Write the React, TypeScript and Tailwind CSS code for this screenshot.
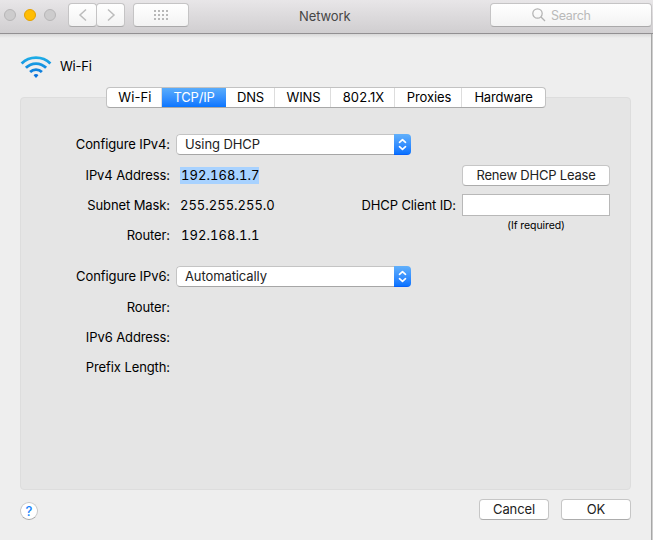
import type { ReactNode } from "react";

const tabs = [
  { name: "Wi-Fi", style: "w-[55px] pl-[2px] tracking-[0.1px]" },
  { name: "TCP/IP", style: "w-[64px] tracking-[-0.2px]" },
  { name: "DNS", style: "w-[49px] pl-px" },
  { name: "WINS", style: "w-[56px] pl-[2px]" },
  { name: "802.1X", style: "w-[64px] pl-[2px] tracking-[0.1px]" },
  { name: "Proxies", style: "w-[67px] pl-[2px]" },
  { name: "Hardware", style: "w-[83px] tracking-[-0.2px]" },
];

function PushButton({ children, className }: { children: ReactNode; className: string }) {
  return (
    <button className={`h-[21px] rounded-[4px] border border-[#c6c6c6] border-b-[#acacac] bg-white text-center leading-[19px] text-[#222] ${className}`}>
      {children}
    </button>
  );
}

function Popup({ value }: { value: string }) {
  return (
    <div className="ml-[6px] flex h-[21px] w-[235px] overflow-hidden rounded-[4px]">
      <div className="flex-1 rounded-l-[4px] border border-r-0 border-[#c4c4c4] border-b-[#a6a6a6] bg-white pl-2 leading-[19px] text-[#222]">{value}</div>
      <div className="w-[17px] border-b border-[#0860f8] bg-gradient-to-b from-[#61b0fb] to-[#0772ff]">
        <svg width="17" height="20" viewBox="0 0 17 20" fill="none" stroke="white" strokeWidth="1.7" strokeLinecap="round" strokeLinejoin="round">
          <path d="M5.5 8.3 8.5 5.7l3 2.6M5.5 12.7l3 2.6 3-2.6" />
        </svg>
      </div>
    </div>
  );
}

function Row({ label, children, className }: { label: string; children?: ReactNode; className: string }) {
  return (
    <div className={`flex items-center ${className}`}>
      <div className="w-[149px] text-right leading-[19px]">{label}</div>
      {children}
    </div>
  );
}

function WifiIcon() {
  return (
    <svg className="mt-[21px]" width="32" height="24" viewBox="0 0 32 24" fill="none" strokeWidth="2.8">
      <defs>
        <linearGradient id="signal" x1="0" y1="0" x2="0" y2="24" gradientUnits="userSpaceOnUse">
          <stop stopColor="#20b4e8" />
          <stop offset="1" stopColor="#0768d8" />
        </linearGradient>
      </defs>
      <g stroke="url(#signal)">
        <path d="M1.6 8.4C9.6.6 22.4.6 30.4 8.4" />
        <path d="M5.9 12.8c5.6-5.7 14.6-5.7 20.2 0" />
        <path d="M10.1 17c3.3-3.3 8.5-3.3 11.8 0" />
      </g>
      <path d="M13.6 20.2c1.3-1.5 3.5-1.5 4.8 0L16 23z" fill="#0871dc" />
    </svg>
  );
}

export default function App() {
  return (
    <div className="flex h-[540px] w-[653px] flex-col overflow-hidden bg-[#eeeeee] font-['Inter','Liberation_Sans',sans-serif] text-[13px] leading-5 tracking-[-0.1px] text-black">
      <header className="flex h-[34px] shrink-0 items-start border-b border-[#929092] bg-gradient-to-b from-[#e8e6e8] to-[#d0ced0]">
        <div className="ml-1 mt-[9px] flex gap-2">
          <i className="h-3 w-3 rounded-full border border-[#b7b6b7] bg-[#cdcccd]" />
          <i className="h-3 w-3 rounded-full border border-[#e4a000] bg-[#ffbd04]" />
          <i className="h-3 w-3 rounded-full border border-[#b7b6b7] bg-[#cdcccd]" />
        </div>
        <div className="ml-3 mt-[3px] flex">
          <button className="flex h-6 w-[29px] items-center justify-center rounded-[4px] border border-[#c5c4c5] border-b-[#aaa9aa] bg-gradient-to-b from-white to-[#f3f3f3]">
            <svg width="10" height="14" fill="none" stroke="#bcbcbc" strokeWidth="1.5"><path d="M8 1.5 2 7l6 5.5" /></svg>
          </button>
          <button className="-ml-px flex h-6 w-[29px] items-center justify-center rounded-[4px] border border-[#c5c4c5] border-b-[#aaa9aa] bg-gradient-to-b from-white to-[#f3f3f3]">
            <svg width="10" height="14" fill="none" stroke="#bcbcbc" strokeWidth="1.5"><path d="m2 1.5 6 5.5-6 5.5" /></svg>
          </button>
        </div>
        <button className="ml-2 mt-[3px] flex h-6 w-14 items-center justify-center rounded-[4px] border border-[#c5c4c5] border-b-[#aaa9aa] bg-gradient-to-b from-white to-[#f3f3f3]">
          <svg width="14" height="10" fill="#b8b8b8">
            {[0, 4, 8, 12].map((x) => [0, 4, 8].map((y) => <rect key={`${x}-${y}`} x={x} y={y} width="2" height="2" />))}
          </svg>
        </button>
        <h1 className="ml-[110px] mt-[6px] w-[53px] whitespace-nowrap text-[#464646]">Network</h1>
        <div className="ml-[138px] mt-[3px] flex h-6 w-[162px] items-center rounded-[4px] border border-[#c5c4c5] border-b-[#aaa9aa] bg-gradient-to-b from-white to-[#f3f3f3]">
          <svg className="ml-[41px]" width="14" height="14" fill="none" stroke="#b2b2b2" strokeWidth="1.2"><circle cx="5.5" cy="5.5" r="4.7" /><path d="m9 9 4 4" /></svg>
          <span className="ml-[5px] pt-[2px] text-[12.5px] tracking-[-0.3px] text-[#b9b9b9]">Search</span>
        </div>
      </header>
      <main className="relative flex min-h-0 flex-1 flex-col">
        <div className="h-1 shrink-0 bg-gradient-to-b from-[#d8d8d8] to-[#eeeeee]" />
        <div className="absolute bottom-0 right-0 top-0 w-[2px] border-l border-[#a7a7a7] bg-[#cecece]" />
        <div className="ml-5 flex h-[59px] shrink-0 -translate-y-[4px] items-start">
          <WifiIcon />
          <div className="ml-2 mt-[22px] tracking-[-0.2px]">Wi-Fi</div>
        </div>
        <section className="ml-5 flex h-[393px] w-[611px] shrink-0 flex-col rounded-[4px] border border-[#dddddd] bg-[#e5e5e5]">
          <nav className="-mt-[11px] ml-[85px] flex h-[21px] w-[440px] shrink-0 overflow-hidden rounded-[4px] border border-[#c2c2c2] border-b-[#a8a8a8] bg-white">
            {tabs.map(({ name, style }) => (
              <button key={name} className={`shrink-0 text-center leading-[19px] ${style} ${name === "TCP/IP" ? "bg-gradient-to-b from-[#59acfb] to-[#0875ff] text-white" : "border-r border-[#dddddd] last:border-r-0"}`}>{name}</button>
            ))}
          </nav>
          <div className="flex">
            <div className="mt-[26px] w-[390px]">
              <Row className="h-[21px]" label="Configure IPv4:"><Popup value="Using DHCP" /></Row>
              <Row className="mt-[10px] h-5" label="IPv4 Address:"><span className="ml-[10px] h-[17px] w-[79px] bg-[#a8d2ff] pl-px leading-[17px] tabular-nums tracking-[0.05px]">192.168.1.7</span></Row>
              <Row className="mt-[10px] h-5" label="Subnet Mask:"><span className="ml-[10px] tabular-nums tracking-[0px]">255.255.255.0</span></Row>
              <Row className="mt-[10px] h-5" label="Router:"><span className="ml-[11px] tabular-nums tracking-[0.05px]">192.168.1.1</span></Row>
              <Row className="mt-[21px] h-[21px]" label="Configure IPv6:"><Popup value="Automatically" /></Row>
              <Row className="mt-[10px] h-5" label="Router:" />
              <Row className="mt-[10px] h-5" label="IPv6 Address:" />
              <Row className="mt-[10px] h-5" label="Prefix Length:" />
            </div>
            <div className="-ml-[60px] mt-[57px] flex w-[259px] flex-col">
              <PushButton className="ml-auto w-[148px] tracking-[-0.2px]">Renew DHCP Lease</PushButton>
              <label className="mt-2 flex items-center whitespace-nowrap">
                <span className="w-[105px] text-right">DHCP Client ID:</span>
                <input aria-label="DHCP Client ID" className="ml-[6px] h-[22px] w-[148px] border border-[#b8b8b8] bg-white" />
              </label>
              <div className="ml-auto w-[148px] pt-px text-center text-[10.5px] leading-[18px] tracking-[-0.1px]">(If required)</div>
            </div>
          </div>
        </section>
        <footer className="ml-5 mt-[9px] flex w-[611px] items-start">
          <button className="mt-[3px] h-[18px] w-[18px] rounded-full border border-[#c9c9c9] border-b-[#a6a6a6] bg-white text-[13px] font-medium leading-[17px] text-[#1683fb]">?</button>
          <PushButton className="ml-auto w-[70px]">Cancel</PushButton>
          <PushButton className="ml-3 w-[70px]">OK</PushButton>
        </footer>
      </main>
    </div>
  );
}
